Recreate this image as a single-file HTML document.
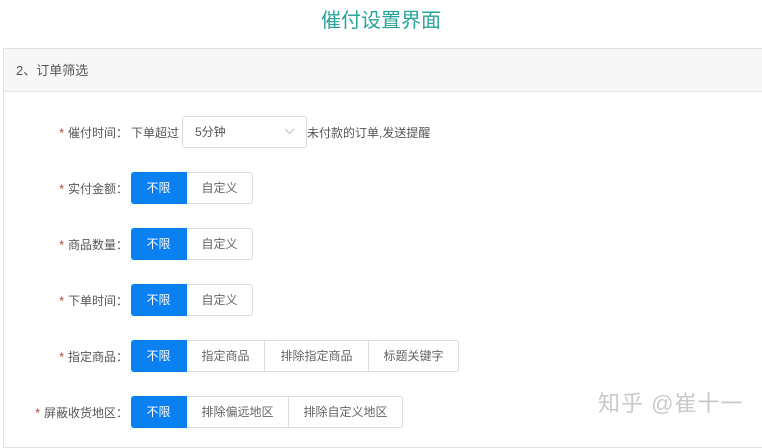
<!DOCTYPE html>
<html><head><meta charset="utf-8"><style>
*{margin:0;padding:0;box-sizing:border-box}
body{width:762px;height:431px;background:#fff;font-family:"Liberation Sans","Noto Sans CJK SC",sans-serif;position:relative;overflow:hidden;color:#555}
.title{position:absolute;top:4px;left:0;width:762px;text-align:center;font-size:20px;color:#2aa39b;font-weight:normal}
.panel{position:absolute;left:3px;top:48px;width:770px;height:400px;border:1px solid #e3e3e3}
.hd{height:43px;background:#f7f7f7;border-bottom:1px solid #e8e8e8;padding-left:12px;line-height:43px;font-size:13px;color:#555}
.row{position:absolute;left:0;height:32px;display:flex;align-items:center;font-size:12px}
.lab{position:absolute;right:634px;white-space:nowrap;color:#555}
.lab b{color:#c0392b;font-weight:normal;margin-right:4px}
.grp{position:absolute;left:131px;display:flex;height:32px}
.grp span{height:32px;line-height:30px;border:1px solid #ddd;border-left:none;text-align:center;color:#666;background:#fff}
.grp span:first-child{background:#0b80f0;border-color:#0b80f0;color:#fff;border-radius:3px 0 0 3px}
.grp span:last-child{border-radius:0 3px 3px 0}
.wm{position:absolute;left:598px;top:386px;font-size:22px;color:#c9c9c9;letter-spacing:1px}
</style></head><body>
<div class="title">催付设置界面</div>
<div class="panel"><div class="hd">2、订单筛选</div></div>
<div class="row" style="top:116px;width:762px"><div class="lab"><b>*</b>催付时间：</div>
<div style="position:absolute;left:131px;color:#555">下单超过</div>
<div style="position:absolute;left:182px;width:125px;height:32px;border:1px solid #ddd;border-radius:3px;line-height:30px;padding-left:12px;color:#555">5分钟<svg style="position:absolute;right:11px;top:11px" width="11" height="7" viewBox="0 0 11 7"><path d="M1 1L5.5 5.5L10 1" fill="none" stroke="#bbb" stroke-width="1"/></svg></div>
<div style="position:absolute;left:307px;color:#555">未付款的订单,发送提醒</div></div>
<div class="row" style="top:172px;width:762px"><div class="lab"><b>*</b>实付金额：</div><div class="grp"><span style="width:56px">不限</span><span style="width:66px">自定义</span></div></div>
<div class="row" style="top:228px;width:762px"><div class="lab"><b>*</b>商品数量：</div><div class="grp"><span style="width:56px">不限</span><span style="width:66px">自定义</span></div></div>
<div class="row" style="top:284px;width:762px"><div class="lab"><b>*</b>下单时间：</div><div class="grp"><span style="width:56px">不限</span><span style="width:66px">自定义</span></div></div>
<div class="row" style="top:340px;width:762px"><div class="lab"><b>*</b>指定商品：</div><div class="grp"><span style="width:56px">不限</span><span style="width:78px">指定商品</span><span style="width:104px">排除指定商品</span><span style="width:90px">标题关键字</span></div></div>
<div class="row" style="top:396px;width:762px"><div class="lab"><b>*</b>屏蔽收货地区：</div><div class="grp"><span style="width:56px">不限</span><span style="width:102px">排除偏远地区</span><span style="width:114px">排除自定义地区</span></div></div>
<div class="wm">知乎 @崔十一</div>
</body></html>
